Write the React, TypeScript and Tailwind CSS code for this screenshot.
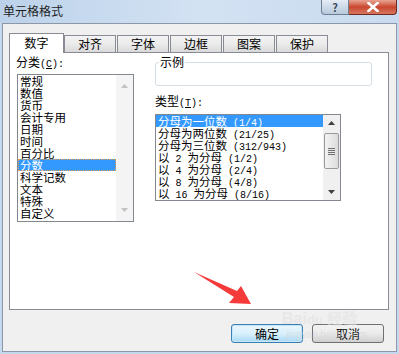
import React from 'react'

const cats = ['常规', '数值', '货币', '会计专用', '日期', '时间', '百分比', '分数', '科学记数', '文本', '特殊', '自定义']
const types = [
  '分母为一位数 (1/4)',
  '分母为两位数 (21/25)',
  '分母为三位数 (312/943)',
  '以 2 为分母 (1/2)',
  '以 4 为分母 (2/4)',
  '以 8 为分母 (4/8)',
  '以 16 为分母 (8/16)',
]
const tabs = ['对齐', '字体', '边框', '图案', '保护']

// SimSun-like: ASCII half width (6px), CJK full width (12px)
const Mixed = ({ text }: { text: string }) => {
  const parts = text.match(/[\x00-\x7f]+|[^\x00-\x7f]+/g) || []
  return (
    <>
      {parts.map((p, i) =>
        /^[\x00-\x7f]/.test(p) ? (
          <span key={i} className="text-[10px] whitespace-pre" style={{ fontFamily: '"Liberation Mono", monospace' }}>
            {p}
          </span>
        ) : (
          <span key={i}>{p}</span>
        )
      )}
    </>
  )
}

const Up = ({ c }: { c: string }) => (
  <svg width="7" height="4" viewBox="0 0 7 4"><path d="M0 4 L3.5 0 L7 4 Z" fill={c} /></svg>
)
const Down = ({ c }: { c: string }) => (
  <svg width="7" height="4" viewBox="0 0 7 4"><path d="M0 0 L3.5 4 L7 0 Z" fill={c} /></svg>
)

const App = () => {
  return (
    <div
      className="w-[399px] h-[354px] bg-[#c4d8ee] flex flex-col relative overflow-hidden text-black"
      style={{ fontFamily: '"Noto Sans CJK SC", "Liberation Sans", sans-serif' }}
    >
      {/* ------------ title bar ------------ */}
      <div className="h-[23px] shrink-0 flex bg-gradient-to-r from-[#bcd2ea] via-[#d3e2f3] to-[#c9dbef]">
        <span className="ml-[3px] mt-[3px] text-[12px] leading-[15px] text-[#1e1e1e]">单元格格式</span>
        <div className="ml-auto mr-[2px] flex h-[15px]">
          <div className="w-[28px] h-full rounded-bl-[4px] border border-t-0 border-[#6f7f92] bg-gradient-to-b from-[#e4ecf5] to-[#b8c9dc] flex items-center justify-center text-[11px] leading-none font-bold text-[#3d4d60]">
            ?
          </div>
          <div className="w-[48px] h-full rounded-br-[4px] border border-l-0 border-t-0 border-[#6e2a22] bg-gradient-to-b from-[#e8a493] via-[#c9462f] to-[#d6775f] flex items-center justify-center">
            <svg width="12" height="10" viewBox="0 0 12 10">
              <path d="M1.5 1 L10.5 9 M10.5 1 L1.5 9" stroke="#fff" strokeWidth="2.6" strokeLinecap="square" />
            </svg>
          </div>
        </div>
      </div>

      {/* ------------ client ------------ */}
      <div className="mx-[2px] h-[329px] border border-[#8c98a8] bg-[#f0f0f0] flex flex-col">
        {/* tabs */}
        <div className="mt-[9px] ml-[6px] h-[19px] flex items-end text-[12px] leading-[12px]">
          <div className="w-[55px] h-[20px] -mb-px relative z-10 bg-white border border-b-0 border-[#898c95] flex items-center justify-center pb-[1px]">
            数字
          </div>
          {tabs.map((t, i) => (
            <div
              key={t}
              className={`w-[52px] h-[17px] ${i === 0 ? '' : 'ml-[1px]'} border border-b-0 border-[#898c95] bg-gradient-to-b from-[#f3f3f3] via-[#ebebeb] to-[#d9d9d9] flex items-center justify-center`}
            >
              {t}
            </div>
          ))}
        </div>

        {/* panel */}
        <div className="ml-[6px] w-[380px] h-[258px] border border-[#898c95] bg-white flex text-[12px] leading-[12px]">
          {/* left column */}
          <div className="ml-[6px] flex flex-col">
            <div className="mt-[3px] whitespace-pre">
              分类<span className="text-[10px]" style={{ fontFamily: '"Liberation Mono", monospace' }}>(<span className="underline">C</span>):</span>
            </div>
            <div className="mt-[3px] ml-[1px] w-[117px] h-[148px] border border-[#828790] flex">
              <div className="flex-1 overflow-hidden">
                {cats.map((c) => (
                  <div
                    key={c}
                    className={`h-[12px] pl-[2px] whitespace-nowrap text-[11.5px] leading-[12px] ${c === '分数' ? 'bg-[#3399ff] text-white outline outline-1 outline-dotted outline-[#e8a050] -outline-offset-1' : ''}`}
                  >
                    {c}
                  </div>
                ))}
              </div>
              <div className="w-[17px] bg-[#f4f4f4] flex flex-col items-center justify-between py-[9px]">
                <Up c="#c2c2c2" />
                <Down c="#c2c2c2" />
              </div>
            </div>
          </div>

          {/* right column */}
          <div className="ml-[21px] flex flex-col">
            <fieldset className="mt-[3px] w-[217px] border border-[#d5dfe5] rounded-[3px]">
              <legend className="ml-[3px] px-[1px] text-[12px] leading-[12px]">示例</legend>
              <div className="h-[17px]" />
            </fieldset>
            <div className="mt-[9px] whitespace-pre">
              类型<span className="text-[10px]" style={{ fontFamily: '"Liberation Mono", monospace' }}>(<span className="underline">T</span>):</span>
            </div>
            <div className="mt-[4px] w-[186px] h-[87px] border border-[#828790] flex">
              <div className="flex-1 overflow-hidden">
                {types.map((t, i) => (
                  <div
                    key={t}
                    className={`h-[12px] pl-[2px] whitespace-nowrap text-[11.5px] leading-[12px] ${i === 0 ? 'bg-[#3399ff] text-white' : ''}`}
                  >
                    <Mixed text={t} />
                  </div>
                ))}
              </div>
              <div className="w-[17px] bg-[#f0f0f0] flex flex-col items-center">
                <div className="h-[16px] flex items-center">
                  <Up c="#404040" />
                </div>
                <div className="mt-[2px] w-[15px] h-[36px] rounded-[2px] border border-[#9a9a9a] bg-gradient-to-r from-[#f3f3f3] to-[#dcdcdc] flex flex-col items-center justify-center gap-[1px]">
                  <div className="w-[7px] h-[1px] bg-[#707070]" />
                  <div className="w-[7px] h-[1px] bg-[#707070]" />
                  <div className="w-[7px] h-[1px] bg-[#707070]" />
                  <div className="w-[7px] h-[1px] bg-[#707070]" />
                </div>
                <div className="mt-auto h-[16px] flex items-center">
                  <Down c="#404040" />
                </div>
              </div>
            </div>
          </div>
        </div>

        {/* buttons */}
        <div className="mt-[14px] mr-[12px] flex justify-end gap-[9px] text-[12px] leading-[12px]">
          <button className="w-[72px] h-[19px] rounded-[3px] border border-[#3c7fb1] bg-gradient-to-b from-[#eaf6fd] via-[#d9f0fc] to-[#a7d9f5] shadow-[inset_0_0_0_1px_#c5e6fa]">
            确定
          </button>
          <button className="w-[72px] h-[19px] rounded-[3px] border border-[#707070] bg-gradient-to-b from-[#f2f2f2] via-[#ebebeb] to-[#cfcfcf]">
            取消
          </button>
        </div>
      </div>
      <div className="h-[2px]" />

      {/* ------------ watermark + annotation overlay ------------ */}
      <div
        className="absolute left-[282px] top-[310px] text-[16px] leading-[16px] font-bold text-[#e2e2e2] opacity-60 pointer-events-none whitespace-nowrap"
        style={{ fontFamily: '"Liberation Sans", sans-serif' }}
      >
        Bai<span className="text-[13px]">du</span>{' '}
        <span className="text-[15px]" style={{ fontFamily: '"Noto Sans CJK SC", sans-serif' }}>经验</span>
      </div>
      <div
        className="absolute left-[286px] top-[330px] text-[10px] leading-[10px] text-[#d6d6d6] opacity-60 pointer-events-none"
        style={{ fontFamily: '"Liberation Sans", sans-serif' }}
      >
        jingyan.baidu.com
      </div>
      <svg className="absolute left-0 top-0 pointer-events-none" width="399" height="354">
        <polygon points="194,272 237,291 241,286 251,304 229,303 234,297" fill="#f53a3a" />
      </svg>
    </div>
  )
}

export default App
